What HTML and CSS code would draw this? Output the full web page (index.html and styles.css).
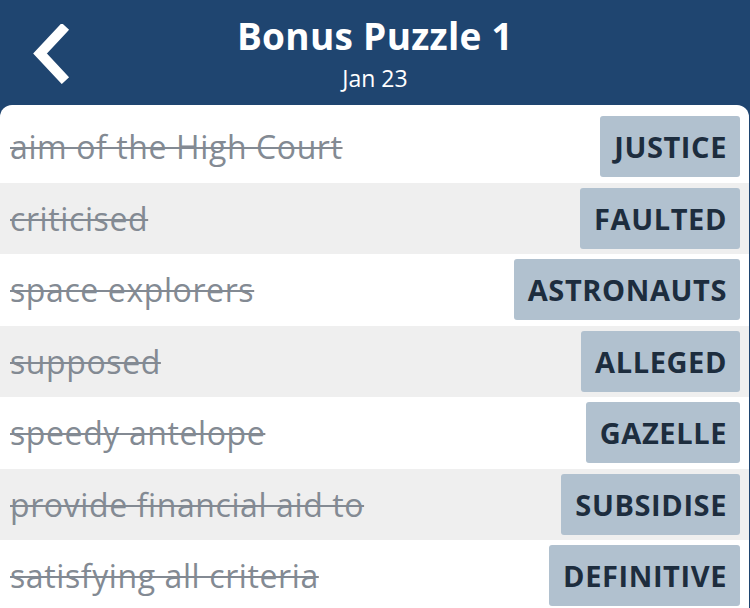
FILE: index.html
```html
<!DOCTYPE html>
<html lang="en">
<head>
    <meta charset="UTF-8">
    <meta name="viewport" content="width=device-width, initial-scale=1.0">
    <title>Bonus Puzzle 1</title>
    <link rel="stylesheet" href="styles.css">
</head>
<body>

<header class="topbar">
    <button class="back" aria-label="Back">
        <svg width="40" height="60" viewBox="0 0 40 60">
            <polyline points="30,6 8,29.5 30,53" fill="none" stroke="#fff" stroke-width="10" stroke-linecap="square" stroke-linejoin="miter"/>
        </svg>
    </button>
    <div class="titles">
        <h1>Bonus Puzzle 1</h1>
        <div class="date">Jan 23</div>
    </div>
</header>

<ul class="clues">
    <li class="clue"><span class="text">aim of the High Court</span><span class="answer">JUSTICE</span></li>
    <li class="clue"><span class="text">criticised</span><span class="answer">FAULTED</span></li>
    <li class="clue"><span class="text">space explorers</span><span class="answer">ASTRONAUTS</span></li>
    <li class="clue"><span class="text">supposed</span><span class="answer">ALLEGED</span></li>
    <li class="clue"><span class="text">speedy antelope</span><span class="answer">GAZELLE</span></li>
    <li class="clue"><span class="text">provide financial aid to</span><span class="answer">SUBSIDISE</span></li>
    <li class="clue"><span class="text">satisfying all criteria</span><span class="answer">DEFINITIVE</span></li>
</ul>

</body>
</html>
```

FILE: styles.css
```css
body {
    font-family: "Open Sans", "Lato", sans-serif;
    background-color: #1f4570;
    margin: 0;
    padding: 0;
    height: 608px;
    overflow: hidden;
}
.topbar {
    height: 105px;
    display: flex;
    align-items: flex-start;
    justify-content: center;
    position: relative;
    color: #fff;
}
.back {
    position: absolute;
    left: 32px;
    top: 24px;
    background: none;
    border: none;
    padding: 0;
}
.titles {
    text-align: center;
    padding-top: 13px;
}
.titles h1 {
    margin: 0;
    font-size: 37px;
    font-weight: 700;
    line-height: 46px;
    letter-spacing: 0.3px;
}
.date {
    font-size: 23px;
    line-height: 30px;
    margin-top: 4px;
}
.clues {
    list-style: none;
    margin: 0 1px 0 0;
    padding: 6px 0 0;
    background-color: #fff;
    border-radius: 12px 12px 0 0;
    height: 497px;
    overflow: hidden;
}
.clue {
    height: 71.5px;
    display: flex;
    align-items: center;
    justify-content: space-between;
    padding: 0 9px 0 10px;
}
.clue:nth-child(even) {
    background-color: #efefef;
}
.text {
    font-size: 32px;
    color: #838a93;
    letter-spacing: 0.6px;
    text-decoration: line-through;
    text-decoration-thickness: 1.5px;
}
.answer {
    height: 61px;
    display: flex;
    align-items: center;
    padding: 0 13px 0 14px;
    background-color: #b1c1cf;
    border-radius: 3px;
    color: #1d2d3e;
    font-size: 29px;
    font-weight: 700;
    letter-spacing: 0.6px;
}
```
